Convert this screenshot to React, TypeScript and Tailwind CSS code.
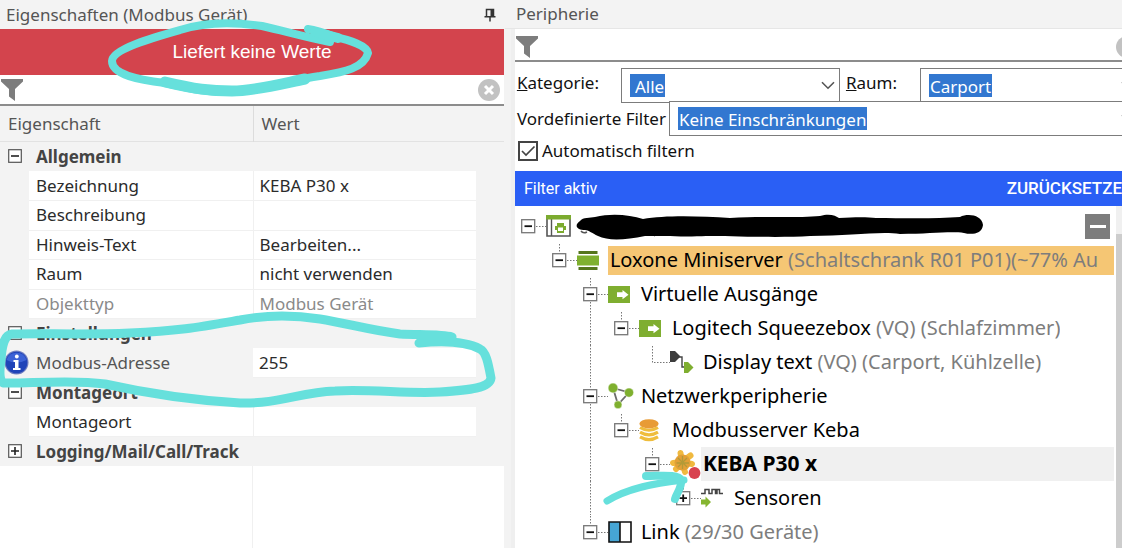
import React, { ReactNode } from "react";

type Property = {
  label: string;
  value?: string;
  kind: "group" | "item";
  collapsed?: boolean;
  muted?: boolean;
  active?: boolean;
};

const properties: Property[] = [
  { kind: "group", label: "Allgemein" },
  { kind: "item", label: "Bezeichnung", value: "KEBA P30 x" },
  { kind: "item", label: "Beschreibung", value: "" },
  { kind: "item", label: "Hinweis-Text", value: "Bearbeiten..." },
  { kind: "item", label: "Raum", value: "nicht verwenden" },
  { kind: "item", label: "Objekttyp", value: "Modbus Gerät", muted: true },
  { kind: "group", label: "Einstellungen" },
  { kind: "item", label: "Modbus-Adresse", value: "255", active: true },
  { kind: "group", label: "Montageort" },
  { kind: "item", label: "Montageort", value: "" },
  { kind: "group", label: "Logging/Mail/Call/Track", collapsed: true },
];

function Funnel() {
  return (
    <svg width="22" height="22" viewBox="0 0 22 22" className="shrink-0" aria-hidden="true">
      <path d="M0 0H22V2.5L14 10V22L8 17.5V10L0 2.5Z" fill="#7d7d7d" />
    </svg>
  );
}

function ClearButton({ label }: { label: string }) {
  return (
    <button type="button" aria-label={label} className="shrink-0">
      <svg width="22" height="22" viewBox="0 0 22 22" className="block">
        <circle cx="11" cy="11" r="11" fill="#c2c2c2" />
        <path d="M7 7L15 15M15 7L7 15" stroke="#fff" strokeWidth="3" />
      </svg>
    </button>
  );
}

function ToggleBox({ open }: { open: boolean }) {
  return (
    <svg width="14" height="14" viewBox="0 0 14 14" className="block">
      <rect x="0.7" y="0.7" width="12.6" height="12.6" fill="#fff" stroke="#555" strokeWidth="1.2" />
      <path d={open ? "M3 7H11" : "M3 7H11M7 3V11"} stroke="#222" strokeWidth="1.6" />
    </svg>
  );
}

function PropertyRow({ row }: { row: Property }) {
  if (row.kind === "group") {
    return (
      <tr className="h-[29px] odd:h-[30px]">
        <td className="p-0 pl-2">
          <button type="button" aria-label={row.label} className="block">
            <ToggleBox open={!row.collapsed} />
          </button>
        </td>
        <th colSpan={3} scope="rowgroup" className="p-0 pl-[7px] text-left font-bold text-[#444]">
          {row.label}
        </th>
      </tr>
    );
  }
  return (
    <tr className={row.muted ? "h-[29px] odd:h-[30px] text-[#8a8a8a]" : "h-[29px] odd:h-[30px]"}>
      <td className="p-0 pl-1">
        {row.active && (
          <svg width="25" height="25" viewBox="0 0 25 25" className="block">
            <circle cx="12.5" cy="12.5" r="12" fill="#6d7cc0" />
            <circle cx="12.5" cy="12.5" r="10.8" fill="#1f43b8" />
            <path d="M2.5 10a10.5 10.5 0 0 1 20 0q-10 5-20 0Z" fill="#3c62d6" />
            <circle cx="12.8" cy="6.5" r="1.9" fill="#fff" />
            <path d="M9.5 10H14.5V18H16.5V20H9V18H11V12H9.5Z" fill="#fff" />
          </svg>
        )}
      </td>
      <th
        scope="row"
        className={
          row.active
            ? "p-0 pl-[7px] text-left font-normal text-[#555]"
            : "border-b border-r border-[#f0f0f0] bg-white p-0 pl-[7px] text-left font-normal"
        }
      >
        {row.label}
      </th>
      <td className="border-b border-[#f0f0f0] bg-white p-0 pl-1.5">{row.value}</td>
      <td className="p-0" />
    </tr>
  );
}

function PropertiesPanel() {
  return (
    <section className="flex w-[45%] shrink-0 flex-col pr-px">
      <header className="flex h-[29px] items-center justify-between pl-1.5 pr-2 text-[#555]">
        <h2 className="text-[17px]">Eigenschaften (Modbus Gerät)</h2>
        <button type="button" aria-label="Anheften">
          <svg width="12" height="14" viewBox="0 0 12 14" className="block">
            <path d="M2.5 8V1.5H9.5V8M0.5 8.7H11.5M6 9V13.5" fill="none" stroke="#333" strokeWidth="1.5" />
            <path d="M6.5 1H9.5V8H6.5Z" fill="#333" />
          </svg>
        </button>
      </header>
      <div className="flex h-[46px] items-center justify-center bg-[#d3444d] font-[Liberation_Sans,sans-serif] text-[19px] text-white">
        Liefert keine Werte
      </div>
      <div className="flex h-[31px] items-center border-b-2 border-[#8c8c8c] bg-white pl-px pr-1">
        <Funnel />
        <input aria-label="Eigenschaften filtern" className="min-w-0 flex-1 outline-none" />
        <ClearButton label="Filter löschen" />
      </div>
      <table className="w-full table-fixed border-collapse text-[17px]">
        <colgroup>
          <col className="w-[29px]" />
          <col className="w-[224px]" />
          <col />
          <col className="w-[28px]" />
        </colgroup>
        <thead>
          <tr className="h-[35px] border-b border-[#e2e2e2] text-[#555]">
            <th colSpan={2} className="border-r border-[#dcdcdc] p-0 pl-2 text-left font-normal">
              Eigenschaft
            </th>
            <th colSpan={2} className="p-0 pl-2 text-left font-normal">
              Wert
            </th>
          </tr>
        </thead>
        <tbody>
          {properties.map((row, i) => (
            <PropertyRow key={i} row={row} />
          ))}
        </tbody>
      </table>
      <div className="flex flex-1 bg-white">
        <div className="w-[253px] border-r border-[#f0f0f0]" />
      </div>
    </section>
  );
}

function Chevron() {
  return (
    <svg width="14" height="9" viewBox="0 0 14 9" className="ml-auto shrink-0" aria-hidden="true">
      <path d="M1 1.2L7 7.2L13 1.2" fill="none" stroke="#555" strokeWidth="1.6" />
    </svg>
  );
}

function Combo({ id, value, indent }: { id: string; value: string; indent?: boolean }) {
  const inset = indent ? "pl-[5px]" : "pl-px";
  return (
    <div className="flex h-[35px] min-w-0 flex-1 items-center border border-[#7c7c7c] bg-white pl-2 pr-1">
      <select
        id={id}
        defaultValue={value}
        className={`h-[23px] appearance-none bg-[#3277d0] text-white outline-none ${inset}`}
      >
        <option>{value}</option>
      </select>
      <Chevron />
    </div>
  );
}

function ProjectIcon() {
  return (
    <svg width="25" height="22" viewBox="0 0 25 22">
      <path d="M1 3V21H24V3" fill="#fff" stroke="#555" strokeWidth="1.6" />
      <path d="M5.5 4V21" stroke="#555" strokeWidth="1.4" />
      <path d="M0 0H25V4.5H0Z" fill="#7cab2f" />
      <path d="M11 8H18V11H20V15H18V18H11V15H9V11H11Z" fill="#7cab2f" />
      <path d="M12 12.500H17V16H12Z" fill="#fff" />
    </svg>
  );
}

function MiniserverIcon() {
  return (
    <svg width="22" height="19" viewBox="0 0 22 19">
      <path d="M1.5 0H20.5V3H1.5ZM1.5 16H20.5V19H1.5Z" fill="#55761c" />
      <path d="M0 4.5H22V14.5H0Z" fill="#7fb02f" />
    </svg>
  );
}

function OutputIcon() {
  return (
    <svg width="22" height="17" viewBox="0 0 22 17">
      <path d="M0 0H22V17H0Z" fill="#7fae30" />
      <path d="M9 6.3H14.5V4L20.5 8.7L14.5 13.3V11H9Z" fill="#fff" />
    </svg>
  );
}

function TextOutputIcon() {
  return (
    <svg width="24" height="22" viewBox="0 0 24 22">
      <path d="M0 0H5L10.5 5.5L5 11H0Z" fill="#3d3d3d" />
      <path d="M9 6H12V16H15" fill="none" stroke="#444" strokeWidth="1.4" />
      <path d="M14 11H18L23.5 16.5L18 22H14Z" fill="#7fae30" />
    </svg>
  );
}

function NetworkIcon() {
  return (
    <svg width="26" height="26" viewBox="0 0 26 26">
      <path d="M5 5L21 9.5L10 21.5Z" fill="none" stroke="#6c6c6c" strokeWidth="1.8" />
      <circle cx="5" cy="5" r="4.9" fill="#7fb02f" stroke="#fff" strokeWidth="0.5" />
      <circle cx="21" cy="9.6" r="4.6" fill="#7fb02f" stroke="#fff" strokeWidth="0.5" />
      <circle cx="10" cy="21.800" r="4" fill="#7fb02f" stroke="#fff" strokeWidth="0.5" />
    </svg>
  );
}

function ServerIcon() {
  return (
    <svg width="20" height="23" viewBox="0 0 20 23">
      <path
        d="M1 8.5Q10 14 19 8.5M1 13.2Q10 18.7 19 13.2M1 17.8Q10 23.300 19 17.800"
        fill="none"
        stroke="#efbd3c"
        strokeWidth="3.2"
      />
      <ellipse cx="10" cy="4.8" rx="9.6" ry="4.6" fill="#e89b35" />
    </svg>
  );
}

function DeviceIcon() {
  return (
    <svg width="32" height="30" viewBox="0 0 32 30">
      <path
        d="M12 13L10.500 4M12 13L20.500 6.500M12 13L22 15M12 13L15 23M12 13L6 20M12 13L3 14"
        stroke="#f0b93f"
        strokeWidth="6"
        strokeLinecap="round"
      />
      <circle cx="12.5" cy="13.5" r="8" fill="#e2a037" />
      <path d="M8 9L17 18M17 9L8 18M12.5 7V20M6.500 14H19" stroke="#b39a37" strokeWidth="1.3" />
      <circle cx="24.500" cy="24" r="6.300" fill="#fff" />
      <circle cx="24.500" cy="24" r="5.900" fill="#d8414e" />
    </svg>
  );
}

function SensorIcon() {
  return (
    <svg width="22" height="20" viewBox="0 0 22 20">
      <path d="M0 5.500H4V1.500H8V5.500H11V1.500H14.500V5.500H16V1.500H18.500V5.500H22" fill="none" stroke="#444" strokeWidth="1.5" />
      <path d="M0 11.500H4.500V8.500L10 14L4.500 19.500V16.500H0Z" fill="#85b530" />
    </svg>
  );
}

function LinkIcon() {
  return (
    <svg width="24" height="22" viewBox="0 0 24 22">
      <path d="M1 1H12V21H1Z" fill="#46a5d4" />
      <path d="M12 1H23V21H12Z" fill="#fff" />
      <path d="M1 1H23V21H1ZM12 1V21" fill="none" stroke="#111" strokeWidth="1.6" />
    </svg>
  );
}

type TreeNode = {
  depth: number;
  toggle?: "open" | "closed";
  icon: ReactNode;
  label: string;
  note?: string;
  look?: "server" | "selected";
  guides?: number[];
  continues?: boolean;
};

const tree: TreeNode[] = [
  { depth: 0, toggle: "open", icon: <ProjectIcon />, label: "" },
  { depth: 1, toggle: "open", icon: <MiniserverIcon />, label: "Loxone Miniserver", note: "(Schaltschrank R01 P01)(~77% Au", look: "server" },
  { depth: 2, toggle: "open", icon: <OutputIcon />, label: "Virtuelle Ausgänge", continues: true },
  { depth: 3, toggle: "open", icon: <OutputIcon />, label: "Logitech Squeezebox", note: "(VQ) (Schlafzimmer)", guides: [2] },
  { depth: 4, icon: <TextOutputIcon />, label: "Display text", note: "(VQ) (Carport, Kühlzelle)", guides: [2] },
  { depth: 2, toggle: "open", icon: <NetworkIcon />, label: "Netzwerkperipherie", continues: true },
  { depth: 3, toggle: "open", icon: <ServerIcon />, label: "Modbusserver Keba", guides: [2] },
  { depth: 4, toggle: "open", icon: <DeviceIcon />, label: "KEBA P30 x", look: "selected", guides: [2] },
  { depth: 5, toggle: "closed", icon: <SensorIcon />, label: "Sensoren", guides: [2] },
  { depth: 2, toggle: "open", icon: <LinkIcon />, label: "Link", note: "(29/30 Geräte)" },
];

function Branch({ node }: { node: TreeNode }) {
  const top = node.depth > 0 ? "M13.5 1V10" : "";
  const bottom = node.continues ? "M13.5 25V34" : "";
  const d = node.toggle ? `${top}M21 17.5H31${bottom}` : "M13.5 1V17.5H31";
  const lines = (
    <svg width="31" height="34" viewBox="0 0 31 34" className="block">
      <path d={d} fill="none" stroke="#777" strokeWidth="1" strokeDasharray="1.5 1.5" />
      {node.toggle && (
        <>
          <rect x="6.700" y="10.700" width="13" height="13" fill="#fff" stroke="#777" strokeWidth="1.3" />
          <path
            d={node.toggle === "open" ? "M9.500 17.200H17" : "M9.500 17.200H17M13.200 13.500V21"}
            stroke="#111"
            strokeWidth="1.8"
          />
        </>
      )}
    </svg>
  );
  return node.toggle ? (
    <button type="button" aria-label={node.label || "Projekt"} className="shrink-0">
      {lines}
    </button>
  ) : (
    <span className="shrink-0">{lines}</span>
  );
}

function TreeRow({ node, children }: { node: TreeNode; children?: ReactNode }) {
  const base = "ml-[3px] flex min-w-0 items-center overflow-hidden whitespace-pre";
  const look =
    node.look === "server"
      ? `${base} h-[29px] flex-1 bg-[#f5c674] pl-0.5`
      : node.look === "selected"
        ? `${base} h-[34px] flex-1 bg-[#f0f0f0] pl-0.5 text-[21px] font-bold`
        : `${base} h-[34px] pl-0.5`;
  return (
    <li className="flex h-[34px] items-center">
      {Array.from({ length: node.depth }, (_, i) => (
        <svg key={i} width="31" height="34" viewBox="0 0 31 34" className="shrink-0">
          {node.guides?.includes(i) && (
            <path d="M13.500 0V34" stroke="#777" strokeWidth="1" strokeDasharray="1.5 1.5" />
          )}
        </svg>
      ))}
      <Branch node={node} />
      <span className="relative z-10 flex w-7 shrink-0 items-center [&>svg]:shrink-0">{node.icon}</span>
      <span className={look}>
        {node.label}
        {node.note && <span className="text-[#7d7d7d]"> {node.note}</span>}
      </span>
      {children}
    </li>
  );
}

function PeripheryPanel() {
  return (
    <section className="flex min-w-0 flex-1 flex-col overflow-hidden">
      <header className="flex h-[29px] items-center border-b border-[#e6e6e6] pl-[11px] text-[17px] text-[#555]">
        <h2>Peripherie</h2>
      </header>
      <div className="-mr-[18px] ml-1.5 flex flex-1 flex-col border-l-4 border-[#efefef] bg-white">
        <div className="flex h-[33px] items-center border-b-2 border-[#8c8c8c] pl-px pr-0.5 pt-1">
          <Funnel />
          <input aria-label="Peripherie filtern" className="min-w-0 flex-1 outline-none" />
          <ClearButton label="Filter löschen" />
        </div>
        <div className="pt-1.5 text-[17px] text-[#111]">
          <div className="flex">
            <div className="flex w-[52%]">
              <label htmlFor="category" className="w-[106px] shrink-0 pl-0.5 pt-0.5">
                <span className="underline">K</span>ategorie:
              </label>
              <Combo id="category" value="Alle" indent />
            </div>
            <div className="flex flex-1">
              <label htmlFor="room" className="w-[80px] shrink-0 pl-1.5 pt-0.5">
                <span className="underline">R</span>aum:
              </label>
              <Combo id="room" value="Carport" />
            </div>
          </div>
          <div className="-mt-0.5 flex items-center">
            <label htmlFor="preset" className="w-[154px] shrink-0 whitespace-nowrap pl-0.5">
              Vordefinierte Filter
            </label>
            <Combo id="preset" value="Keine Einschränkungen" />
          </div>
          <label className="mb-1.5 flex h-[29px] items-center gap-1 pl-[3px]">
            <span className="grid size-5">
              <input
                type="checkbox"
                defaultChecked
                className="peer col-start-1 row-start-1 size-5 appearance-none border-2 border-[#444] bg-white"
              />
              <svg viewBox="0 0 20 20" className="pointer-events-none col-start-1 row-start-1 hidden size-5 peer-checked:block">
                <path d="M4 10L8 14L16.500 5.500" fill="none" stroke="#444" strokeWidth="1.7" />
              </svg>
            </span>
            Automatisch filtern
          </label>
        </div>
        <div className="flex h-[35px] items-center justify-between bg-[#2a5ff5] pl-[9px] pr-[18px] font-[Roboto,sans-serif] text-[16px] text-white">
          <span>Filter aktiv</span>
          <button type="button" className="text-[17px] font-medium">
            ZURÜCKSETZE
          </button>
        </div>
        <div className="flex flex-1">
          <ul className="min-w-0 flex-1 pr-0.5 pt-[3px] text-[20px] text-black">
            {tree.map((node, i) => (
              <TreeRow key={i} node={node}>
                {node.depth === 0 && (
                  <button
                    type="button"
                    aria-label="Alle einklappen"
                    className="ml-auto mr-1 flex size-[25px] items-center justify-center bg-[#7d7d7d]"
                  >
                    <span className="h-[3px] w-4 bg-white" />
                  </button>
                )}
              </TreeRow>
            ))}
          </ul>
          <div className="w-6 bg-[#cdcdcd]">
            <div className="h-[28px] bg-[#f0f0f0]" />
          </div>
        </div>
      </div>
    </section>
  );
}

function Annotations() {
  return (
    <svg width="1122" height="548" viewBox="0 0 1122 548" className="pointer-events-none absolute left-0 top-0 z-20" aria-hidden="true">
      <path
        d="M580 221C583 217 590 218 595 217C612 213 630 215 643 219C665 215 700 216 730 218C765 216 800 218 820 216C830 213 836 216 839 218C855 217 868 217 876 218C900 218 935 219 960 217C968 213 982 215 983 225C982 234 972 235 964 233C950 231 930 234 900 234C880 231 850 236 810 236C780 238 730 236 706 236C690 237 660 236 645 236C625 240 608 241 598 236C592 233 588 230 585 230C578 230 573 226 580 221Z"
        fill="#000"
      />
      <path d="M581 231Q583 234 587 232" fill="none" stroke="#555" strokeWidth="1.5" />
      <g fill="none" stroke="#66e0dc" strokeLinecap="round" strokeLinejoin="round">
        <path
          d="M330 42C300 36 285 31 262 26C235 22 205 22 180 30C155 37 112 49 112 61C112 75 140 80 165 83C185 87 200 92 225 92C255 92 290 80 320 76C345 72 364 68 368 53C367 46 350 40 335 37C325 33 317 30 308 29"
          strokeWidth="8"
        />
        <path d="M165 82C195 89 210 91 232 91C255 91 285 83 305 79" strokeWidth="11" />
        <path d="M315 32L338 38" strokeWidth="10" />
        <path
          d="M452 337C442 334 420 335 400 334C370 330 345 323 320 319C295 315 265 315 240 320C200 327 180 331 130 333C85 335 40 333 12 334C4 335 2 345 1 360C0 370 -2 378 3 383C25 384 70 379 105 384C145 393 190 400 240 403C280 404 300 392 335 391C370 389 410 394 440 392C470 390 490 388 491 378C488 362 486 352 480 349C465 341 440 341 419 343"
          strokeWidth="9"
        />
        <path d="M607 501C628 488 655 483 684 480" strokeWidth="7" />
        <path d="M646 476C662 476 678 474 681 480C682 488 677 492 675 499" strokeWidth="8" />
      </g>
    </svg>
  );
}

export default function App() {
  return (
    <main className="relative flex min-h-screen overflow-hidden bg-[#f3f3f3] font-[Noto_Sans,Open_Sans,sans-serif] text-[#2b2b2b]">
      <PropertiesPanel />
      <PeripheryPanel />
      <Annotations />
    </main>
  );
}
